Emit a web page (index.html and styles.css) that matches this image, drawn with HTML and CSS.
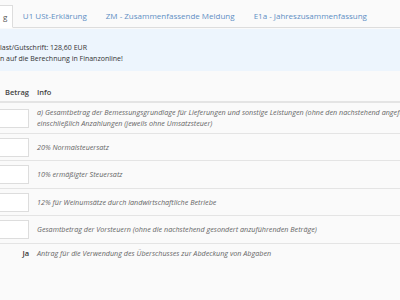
FILE: index.html
```html
<!DOCTYPE html>
<html lang="de">
<head>
  <meta charset="UTF-8" />
  <title>UVA</title>
  <link rel="stylesheet" href="styles.css">
</head>
<body>
  <div class="tabs">
    <a class="tab active">g</a>
    <a class="tab">U1 USt-Erklärung</a>
    <a class="tab">ZM - Zusammenfassende Meldung</a>
    <a class="tab">E1a - Jahreszusammenfassung</a>
  </div>

  <div class="alert">
    <div>last/Gutschrift: 128,60 EUR</div>
    <div>n auf die Berechnung in Finanzonline!</div>
  </div>

  <table class="kz">
    <thead>
      <tr>
        <th class="amount">Betrag</th>
        <th>Info</th>
      </tr>
    </thead>
    <tbody>
      <tr>
        <td class="amount"><input type="text" /></td>
        <td class="info">a) Gesamtbetrag der Bemessungsgrundlage für Lieferungen und sonstige Leistungen (ohne den nachstehend angeführten Eigenverbrauch)<br>einschließlich Anzahlungen (jeweils ohne Umsatzsteuer)</td>
      </tr>
      <tr>
        <td class="amount"><input type="text" /></td>
        <td class="info">20% Normalsteuersatz</td>
      </tr>
      <tr>
        <td class="amount"><input type="text" /></td>
        <td class="info">10% ermäßigter Steuersatz</td>
      </tr>
      <tr>
        <td class="amount"><input type="text" /></td>
        <td class="info">12% für Weinumsätze durch landwirtschaftliche Betriebe</td>
      </tr>
      <tr>
        <td class="amount"><input type="text" /></td>
        <td class="info">Gesamtbetrag der Vorsteuern (ohne die nachstehend gesondert anzuführenden Beträge)</td>
      </tr>
      <tr class="plain">
        <td class="amount">Ja</td>
        <td class="info">Antrag für die Verwendung des Überschusses zur Abdeckung von Abgaben</td>
      </tr>
    </tbody>
  </table>
</body>
</html>
```

FILE: styles.css
```css
:root {
  --bg: #fafafa;
  --line: #e4e4e4;
  --link: #5e8fc4;
  --txt: #333;
  --muted: #666;
  --alert: #edf5fd;
}

* { box-sizing: border-box; }

html { overflow: hidden; }

body {
  margin: 0;
  background: var(--bg);
  font-family: 'Open Sans', sans-serif;
  font-size: 7.5px;
  color: var(--txt);
  white-space: nowrap;
}

.tabs {
  display: flex;
  padding-top: 5px;
  border-bottom: 1px solid #ddd;
  background: var(--bg);
  font-size: 8px;
}

.tab {
  height: 22px;
  line-height: 22px;
  padding: 0 9.5px;
  color: var(--link);
}

.tab.active {
  padding: 0 5px 0 3px;
  margin-bottom: -1px;
  height: 23px;
  background: #fff;
  border: 1px solid #ddd;
  border-left: none;
  border-bottom-color: #fff;
  color: #555;
}

.alert {
  background: var(--alert);
  padding: 13px 0 7px;
  line-height: 11px;
  margin-top: 1px;
  font-size: 7px;
}

.kz {
  border-collapse: collapse;
  margin: 9px 0 0 -20px;
}

.kz th {
  text-align: left;
  font-weight: 600;
  color: #444;
  height: 22px;
  padding: 4px 4px 2px;
  border-bottom: 2px solid var(--line);
}

.kz td {
  padding: 4px 4px 3.6px;
  border-bottom: 1px solid var(--line);
  vertical-align: middle;
}

.kz .amount {
  width: 53px;
  text-align: right;
}

.kz td.info {
  font-style: italic;
  font-size: 7.2px;
  color: var(--muted);
  line-height: 11px;
}

.kz tr.plain td { border-bottom: none; }

.kz tr.plain td.amount {
  color: #333;
  font-weight: 600;
}

input {
  display: block;
  width: 45px;
  height: 19px;
  border: 1px solid #ddd;
  background: #fff;
  margin: 0;
}
```
